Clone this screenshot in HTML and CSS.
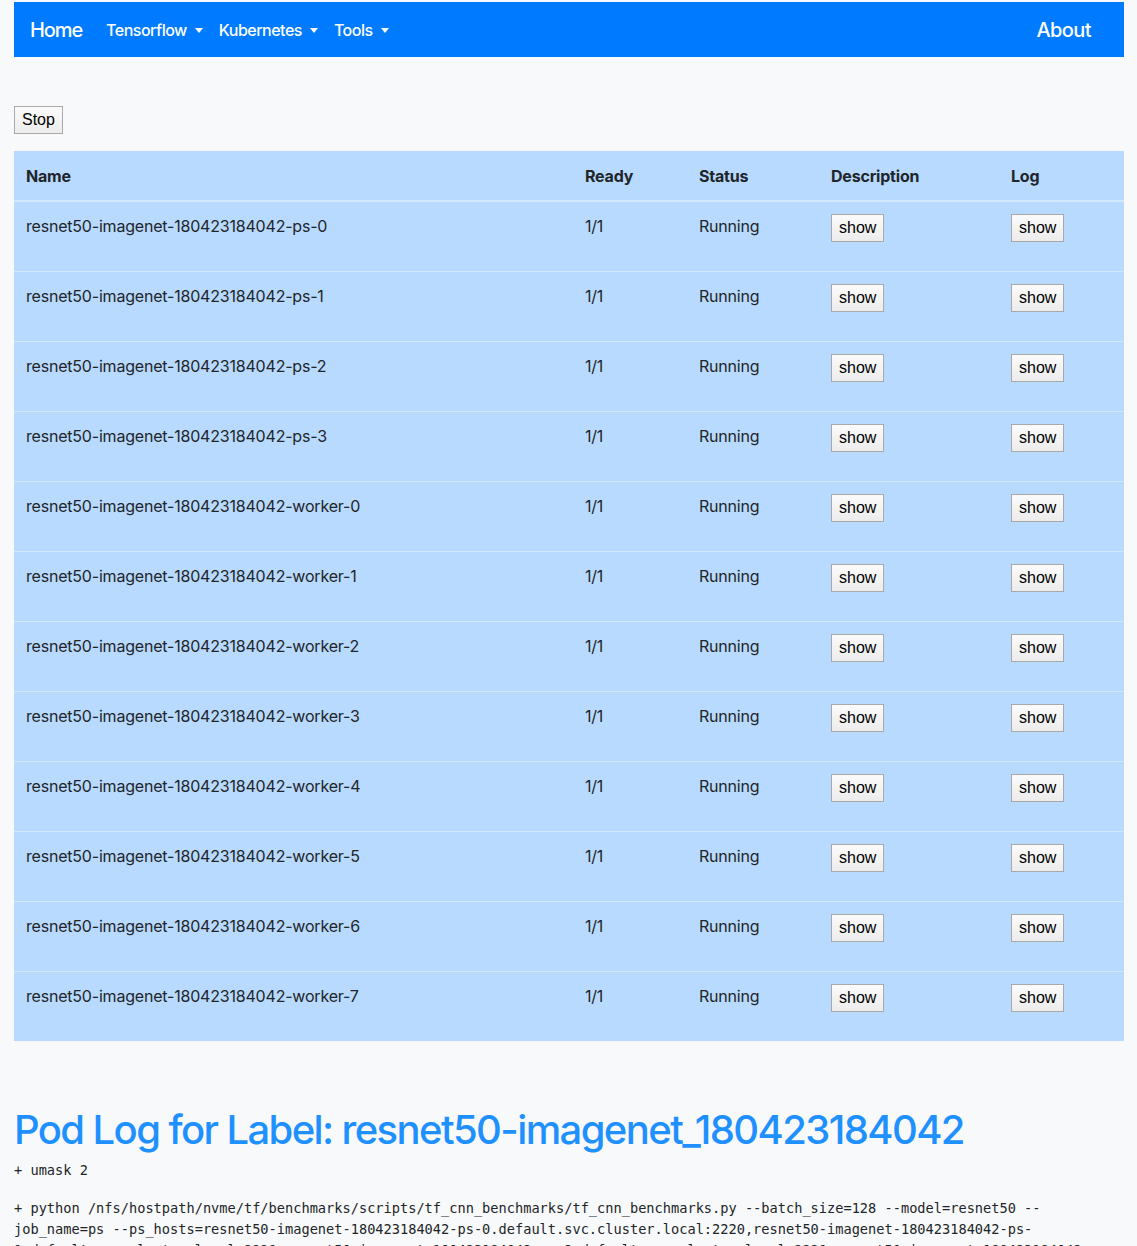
FILE: index.html
```html
<!DOCTYPE html>
<html lang="en">
<head>
<meta charset="utf-8">
<title>Pods</title>
<link rel="stylesheet" href="styles.css">
</head>
<body>
<nav class="navbar">
  <a class="brand" href="#">Home</a>
  <ul class="nav">
    <li><a class="nav-link dropdown" href="#">Tensorflow</a></li>
    <li><a class="nav-link dropdown" href="#">Kubernetes</a></li>
    <li><a class="nav-link dropdown" href="#">Tools</a></li>
  </ul>
  <a class="about" href="#">About</a>
</nav>

<main class="content">
  <div class="actions"><button class="btn">Stop</button></div>

  <table class="pods">
    <colgroup>
      <col class="c-name"><col class="c-ready"><col class="c-status"><col class="c-desc"><col class="c-log">
    </colgroup>
    <thead>
      <tr><th>Name</th><th>Ready</th><th>Status</th><th>Description</th><th>Log</th></tr>
    </thead>
    <tbody>
      <tr><td>resnet50-imagenet-180423184042-ps-0</td><td>1/1</td><td>Running</td><td><button class="btn">show</button></td><td><button class="btn">show</button></td></tr>
      <tr><td>resnet50-imagenet-180423184042-ps-1</td><td>1/1</td><td>Running</td><td><button class="btn">show</button></td><td><button class="btn">show</button></td></tr>
      <tr><td>resnet50-imagenet-180423184042-ps-2</td><td>1/1</td><td>Running</td><td><button class="btn">show</button></td><td><button class="btn">show</button></td></tr>
      <tr><td>resnet50-imagenet-180423184042-ps-3</td><td>1/1</td><td>Running</td><td><button class="btn">show</button></td><td><button class="btn">show</button></td></tr>
      <tr><td>resnet50-imagenet-180423184042-worker-0</td><td>1/1</td><td>Running</td><td><button class="btn">show</button></td><td><button class="btn">show</button></td></tr>
      <tr><td>resnet50-imagenet-180423184042-worker-1</td><td>1/1</td><td>Running</td><td><button class="btn">show</button></td><td><button class="btn">show</button></td></tr>
      <tr><td>resnet50-imagenet-180423184042-worker-2</td><td>1/1</td><td>Running</td><td><button class="btn">show</button></td><td><button class="btn">show</button></td></tr>
      <tr><td>resnet50-imagenet-180423184042-worker-3</td><td>1/1</td><td>Running</td><td><button class="btn">show</button></td><td><button class="btn">show</button></td></tr>
      <tr><td>resnet50-imagenet-180423184042-worker-4</td><td>1/1</td><td>Running</td><td><button class="btn">show</button></td><td><button class="btn">show</button></td></tr>
      <tr><td>resnet50-imagenet-180423184042-worker-5</td><td>1/1</td><td>Running</td><td><button class="btn">show</button></td><td><button class="btn">show</button></td></tr>
      <tr><td>resnet50-imagenet-180423184042-worker-6</td><td>1/1</td><td>Running</td><td><button class="btn">show</button></td><td><button class="btn">show</button></td></tr>
      <tr><td>resnet50-imagenet-180423184042-worker-7</td><td>1/1</td><td>Running</td><td><button class="btn">show</button></td><td><button class="btn">show</button></td></tr>
    </tbody>
  </table>

  <h1 class="log-title">Pod Log for Label: resnet50-imagenet_180423184042</h1>
  <div class="log">
    <div class="log-line">+ umask 2</div>
    <div class="log-line">+ python /nfs/hostpath/nvme/tf/benchmarks/scripts/tf_cnn_benchmarks/tf_cnn_benchmarks.py --batch_size=128 --model=resnet50 --
job_name=ps --ps_hosts=resnet50-imagenet-180423184042-ps-0.default.svc.cluster.local:2220,resnet50-imagenet-180423184042-ps-
1.default.svc.cluster.local:2220,resnet50-imagenet-180423184042-ps-2.default.svc.cluster.local:2220,resnet50-imagenet-180423184042</div>
  </div>
</main>
</body>
</html>
```

FILE: styles.css
```css
html, body {
  margin: 0;
  padding: 0;
}
body {
  background: #f8f9fa;
  color: #212529;
  font-family: Inter, "Liberation Sans", Arial, sans-serif;
  font-size: 16px;
  line-height: 1.5;
  letter-spacing: -0.2px;
  padding: 2px 13px 0 14px;
}
a { text-decoration: none; }

.navbar {
  display: flex;
  align-items: center;
  height: 55px;
  padding: 0 16px;
  background: #007bff;
  box-sizing: border-box;
}
.brand {
  color: #fff;
  font-size: 20px;
  font-weight: 500;
  letter-spacing: -1.1px;
  margin-right: 16px;
}
.nav {
  display: flex;
  list-style: none;
  margin: 0;
  padding: 0;
  flex: 1;
}
.nav-link {
  display: block;
  padding: 8px;
  color: #fff;
  font-weight: 500;
  letter-spacing: -0.5px;
}
.dropdown::after {
  content: "";
  display: inline-block;
  margin-left: 8px;
  vertical-align: 3px;
  border-top: 5px solid #fff;
  border-left: 4.5px solid transparent;
  border-right: 4.5px solid transparent;
}
.about {
  color: #fff;
  font-size: 20px;
  font-weight: 500;
  letter-spacing: -0.6px;
  margin-right: 17px;
}

.actions {
  padding-top: 49px;
  margin-bottom: 17px;
  height: 28px;
}
.btn {
  display: inline-block;
  vertical-align: top;
  font-family: "Liberation Sans", Arial, sans-serif;
  font-size: 16px;
  line-height: 18px;
  letter-spacing: 0;
  color: #000;
  height: 28px;
  padding: 4px 7px;
  border: 1px solid #a9a9a9;
  border-radius: 0;
  background: linear-gradient(#fbfbfb, #ececec);
  box-sizing: border-box;
  margin: 0;
}

.pods {
  width: 100%;
  border-collapse: collapse;
  table-layout: fixed;
  background: #b8daff;
}
.c-name { width: 559px; }
.c-ready { width: 114px; }
.c-status { width: 132px; }
.c-desc { width: 180px; }
.c-log { width: 125px; }
.pods th {
  text-align: left;
  font-weight: 700;
  padding: 12px;
  height: 50px;
  box-sizing: border-box;
  vertical-align: middle;
  border-bottom: 2px solid #d3e7fc;
}
.pods td {
  padding: 12px 12px 0;
  height: 70px;
  box-sizing: border-box;
  vertical-align: top;
  border-top: 1px solid #d3e7fc;
}
.pods tbody tr:first-child td { border-top: 0; }

.log-title {
  color: #1e90ff;
  font-size: 40px;
  font-weight: 500;
  letter-spacing: -1.6px;
  line-height: 48px;
  margin: 65px 0 6px;
}
.log {
  font-family: "DejaVu Sans Mono", "Liberation Mono", monospace;
  font-size: 13.65px;
  line-height: 21px;
  letter-spacing: 0;
  color: #212529;
}
.log-line {
  white-space: pre;
  margin-bottom: 17px;
}
```
